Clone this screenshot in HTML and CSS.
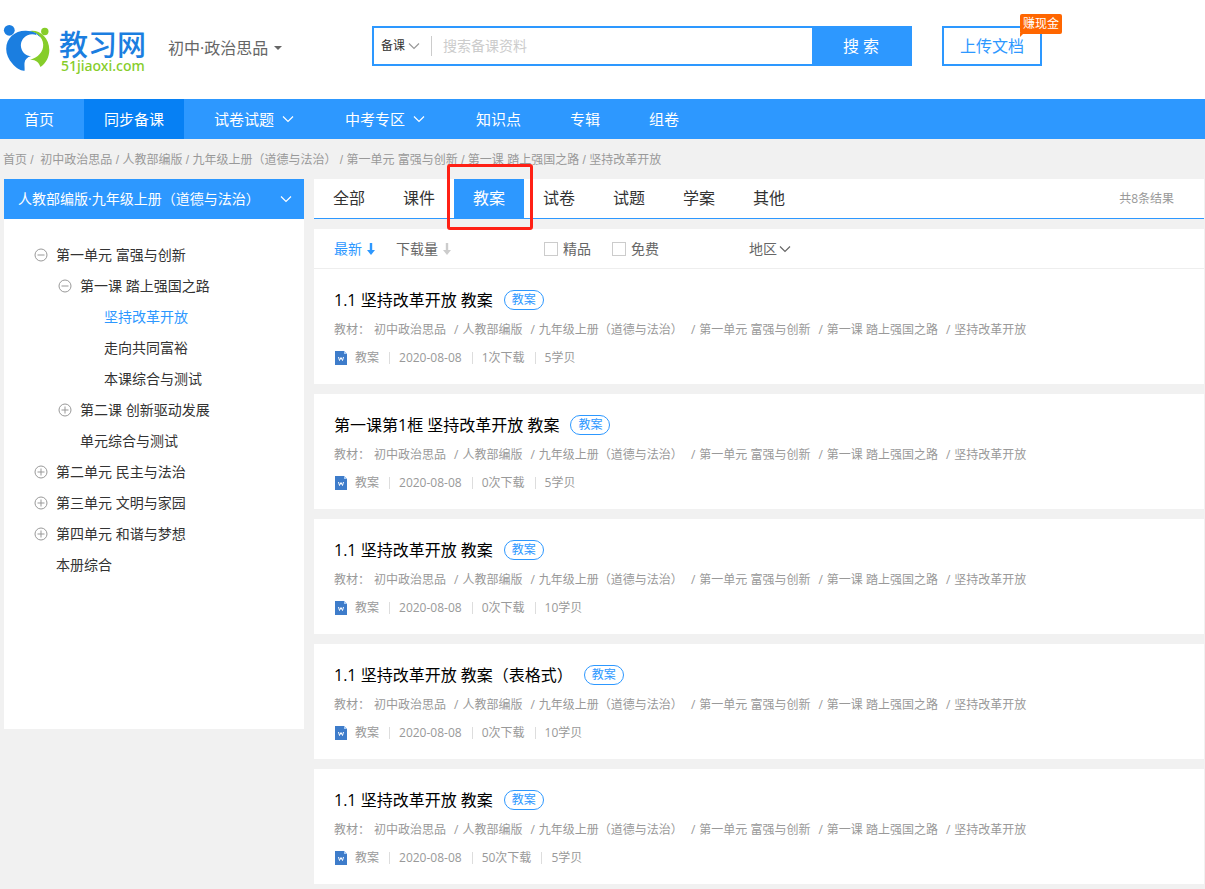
FILE: index.html
```html
<!DOCTYPE html>
<html lang="zh-CN">
<head>
<meta charset="utf-8">
<meta name="viewport" content="width=device-width, initial-scale=1">
<title>教习网</title>
<link rel="stylesheet" href="styles.css">
</head>
<body>
<svg class="sprite" aria-hidden="true">
  <symbol id="chev" viewBox="0 0 12 8"><path d="M1 1.5l5 5 5-5" fill="none" stroke="currentColor" stroke-width="1.2"/></symbol>
  <symbol id="down" viewBox="0 0 8 12"><path d="M2.8 0h2.4v7H8L4 12 0 7h2.8z" fill="currentColor"/></symbol>
  <symbol id="minus" viewBox="0 0 14 14"><circle cx="7" cy="7" r="6" fill="none" stroke="currentColor"/><path d="M3.5 7h7" stroke="currentColor"/></symbol>
  <symbol id="plus" viewBox="0 0 14 14"><circle cx="7" cy="7" r="6" fill="none" stroke="currentColor"/><path d="M3.5 7h7M7 3.5v7" stroke="currentColor"/></symbol>
  <symbol id="word" viewBox="0 0 12 14"><path d="M0 0h9l3 3v11H0z" fill="#3e7cca"/><path d="M9 0l3 3H9z" fill="#a9cdf5"/><path d="M3.500 6l1 3.500L6 6.500l1.500 3 1-3.500" fill="none" stroke="#fff" stroke-width="1"/></symbol>
</svg>

<header class="header">
  <div class="brand">
    <a class="logo" href="#">
      <svg class="logo-mark" viewBox="3 25 47 48" aria-hidden="true">
        <circle cx="9.300" cy="31.300" r="5.400" fill="#1b7ee0"/>
        <circle cx="44.800" cy="32.500" r="3.700" fill="#86cd2a"/>
        <path d="M28 32.200C38 29.500 49.300 37 49.300 51c0 7-3.300 13-8.800 17-1.700-4.500-4.500-7.500-10.500-7.200C38 58.500 43.500 53 43.200 45.500 42.800 38 37 33 28 32.200z" fill="#86cd2a"/>
        <path d="M6.200 50C6.200 39 15 31.500 26 31.800c6 .2 12 2.400 15 7-3.800-3.500-9-4.700-13.500-2.600-5 2.300-7.300 7.300-6.400 12.200 1 5.200 5.200 8.600 10 8.600-4 1.200-6.200 3.500-6.600 7-.2 2.500.3 5 .1 7.700-3.500.5-8.600-2.700-12.100-6.900C8.700 60.500 6.200 55.500 6.200 50z" fill="#1b7ee0"/>
        <path d="M36 35.500c3 1.600 5.300 4.600 5.800 8.500" fill="none" stroke="#fff" stroke-width="1"/>
      </svg>
      <span class="logo-text"><span class="logo-name">教习网</span><span class="logo-url">51jiaoxi.com</span></span>
    </a>
    <button class="subject" type="button">初中·政治思品<span class="caret"></span></button>
  </div>
  <form class="search">
    <label class="scope"><select aria-label="搜索范围"><option>备课</option></select><svg class="chev"><use href="#chev"/></svg></label>
    <input class="search-input" type="text" placeholder="搜索备课资料" aria-label="搜索备课资料">
    <button class="search-btn" type="button">搜 索</button>
  </form>
  <a class="upload" href="#">上传文档<span class="cash">赚现金</span></a>
</header>

<nav class="nav">
  <a href="#">首页</a>
  <a class="current" href="#">同步备课</a>
  <a href="#">试卷试题<svg class="chev"><use href="#chev"/></svg></a>
  <a href="#">中考专区<svg class="chev"><use href="#chev"/></svg></a>
  <a href="#">知识点</a>
  <a href="#">专辑</a>
  <a href="#">组卷</a>
</nav>

<div class="crumbs"><a href="#">首页</a> / &nbsp;<a href="#">初中政治思品</a> / <a href="#">人教部编版</a> / <a href="#">九年级上册（道德与法治）</a> / <a href="#">第一单元 富强与创新</a> / <a href="#">第一课 踏上强国之路</a> / <a href="#">坚持改革开放</a></div>

<div class="layout">
  <aside class="sidebar">
    <button class="book" type="button">人教部编版·九年级上册（道德与法治）<svg class="chev"><use href="#chev"/></svg></button>
    <ul class="tree">
      <li><a href="#"><svg><use href="#minus"/></svg>第一单元 富强与创新</a>
        <ul>
          <li><a href="#"><svg><use href="#minus"/></svg>第一课 踏上强国之路</a>
            <ul>
              <li><a class="leaf selected" href="#">坚持改革开放</a></li>
              <li><a class="leaf" href="#">走向共同富裕</a></li>
              <li><a class="leaf" href="#">本课综合与测试</a></li>
            </ul>
          </li>
          <li><a href="#"><svg><use href="#plus"/></svg>第二课 创新驱动发展</a></li>
          <li><a class="leaf" href="#">单元综合与测试</a></li>
        </ul>
      </li>
      <li><a href="#"><svg><use href="#plus"/></svg>第二单元 民主与法治</a></li>
      <li><a href="#"><svg><use href="#plus"/></svg>第三单元 文明与家园</a></li>
      <li><a href="#"><svg><use href="#plus"/></svg>第四单元 和谐与梦想</a></li>
      <li><a class="leaf" href="#">本册综合</a></li>
    </ul>
  </aside>

  <main class="main">
    <div class="tabs">
      <a href="#">全部</a>
      <a href="#">课件</a>
      <a class="active" href="#">教案<span class="marker"></span></a>
      <a href="#">试卷</a>
      <a href="#">试题</a>
      <a href="#">学案</a>
      <a href="#">其他</a>
      <span class="count">共8条结果</span>
    </div>

    <div class="filters">
      <div class="sorts">
        <button class="on" type="button">最新<svg><use href="#down"/></svg></button>
        <button type="button">下载量<svg><use href="#down"/></svg></button>
      </div>
      <div class="checks">
        <label><input type="checkbox">精品</label>
        <label><input type="checkbox">免费</label>
      </div>
      <button class="region" type="button">地区<svg class="chev"><use href="#chev"/></svg></button>
    </div>

    <div class="results">
      <article class="item">
        <h2><a href="#">1.1 坚持改革开放 教案</a><span class="tag">教案</span></h2>
        <p class="path">教材：<span>初中政治思品</span><i>/</i><span>人教部编版</span><i>/</i><span>九年级上册（道德与法治）</span><i>/</i><span>第一单元 富强与创新</span><i>/</i><span>第一课 踏上强国之路</span><i>/</i><span>坚持改革开放</span></p>
        <div class="info"><svg><use href="#word"/></svg><span>教案</span><span>2020-08-08</span><span>1次下载</span><span>5学贝</span></div>
      </article>
      <article class="item">
        <h2><a href="#">第一课第1框 坚持改革开放 教案</a><span class="tag">教案</span></h2>
        <p class="path">教材：<span>初中政治思品</span><i>/</i><span>人教部编版</span><i>/</i><span>九年级上册（道德与法治）</span><i>/</i><span>第一单元 富强与创新</span><i>/</i><span>第一课 踏上强国之路</span><i>/</i><span>坚持改革开放</span></p>
        <div class="info"><svg><use href="#word"/></svg><span>教案</span><span>2020-08-08</span><span>0次下载</span><span>5学贝</span></div>
      </article>
      <article class="item">
        <h2><a href="#">1.1 坚持改革开放 教案</a><span class="tag">教案</span></h2>
        <p class="path">教材：<span>初中政治思品</span><i>/</i><span>人教部编版</span><i>/</i><span>九年级上册（道德与法治）</span><i>/</i><span>第一单元 富强与创新</span><i>/</i><span>第一课 踏上强国之路</span><i>/</i><span>坚持改革开放</span></p>
        <div class="info"><svg><use href="#word"/></svg><span>教案</span><span>2020-08-08</span><span>0次下载</span><span>10学贝</span></div>
      </article>
      <article class="item">
        <h2><a href="#">1.1 坚持改革开放 教案（表格式）</a><span class="tag">教案</span></h2>
        <p class="path">教材：<span>初中政治思品</span><i>/</i><span>人教部编版</span><i>/</i><span>九年级上册（道德与法治）</span><i>/</i><span>第一单元 富强与创新</span><i>/</i><span>第一课 踏上强国之路</span><i>/</i><span>坚持改革开放</span></p>
        <div class="info"><svg><use href="#word"/></svg><span>教案</span><span>2020-08-08</span><span>0次下载</span><span>10学贝</span></div>
      </article>
      <article class="item">
        <h2><a href="#">1.1 坚持改革开放 教案</a><span class="tag">教案</span></h2>
        <p class="path">教材：<span>初中政治思品</span><i>/</i><span>人教部编版</span><i>/</i><span>九年级上册（道德与法治）</span><i>/</i><span>第一单元 富强与创新</span><i>/</i><span>第一课 踏上强国之路</span><i>/</i><span>坚持改革开放</span></p>
        <div class="info"><svg><use href="#word"/></svg><span>教案</span><span>2020-08-08</span><span>50次下载</span><span>5学贝</span></div>
      </article>
    </div>
  </main>
</div>
</body>
</html>
```

FILE: styles.css
```css
* { box-sizing: border-box; }

body {
  margin: 0;
  background: #f1f1f1;
  color: #333;
  font: 14px/20px "Open Sans", "Noto Sans CJK SC", sans-serif;
}

a { color: inherit; text-decoration: none; }
button, input, select { font: inherit; color: inherit; }
button { padding: 0; border: 0; background: none; cursor: pointer; }
ul { margin: 0; padding: 0; list-style: none; }
svg { flex: none; }

.sprite { display: none; }
.chev { width: 12px; height: 8px; }

/* Header */
.header {
  display: flex;
  align-items: flex-start;
  padding: 26px 20px 29px 3px;
  background: #fff;
}
.brand {
  display: flex;
  align-items: center;
  gap: 22px;
  flex: 0 0 369px;
  height: 44px;
}
.logo { display: flex; align-items: center; gap: 9px; }
.logo-mark { width: 47px; height: 48px; }
.logo-text { display: flex; flex-direction: column; padding-top: 6px; }
.logo-name {
  color: #1b7ee0;
  font-size: 29px;
  line-height: 29px;
  font-weight: 500;
}
.logo-url {
  padding-left: 2px;
  color: #86cd2a;
  font: 500 14px/14px "Noto Sans", sans-serif;
}
.subject {
  display: flex;
  align-items: center;
  gap: 6px;
  color: #666;
  font-size: 16px;
  white-space: nowrap;
}
.caret { border: 4px solid transparent; border-top-color: #666; border-bottom: 0; }

.search {
  display: flex;
  flex: 0 1 540px;
  min-width: 0;
  height: 40px;
  border: 2px solid #2d98ff;
}
.scope {
  display: flex;
  align-items: center;
  align-self: center;
  gap: 2px;
  height: 20px;
  padding: 0 11px 0 7px;
  border-right: 1px solid #ccc;
  color: #999;
}
.scope select {
  appearance: none;
  width: 25px;
  padding: 0;
  border: 0;
  background: none;
  color: #333;
  font-size: 12px;
}
.search-input {
  flex: 1;
  min-width: 0;
  padding: 0 11px;
  border: 0;
  outline: 0;
  background: none;
}
.search-input::placeholder { color: #ccc; }
.search-btn { width: 98px; background: #2d98ff; color: #fff; font-size: 16px; }

.upload {
  position: relative;
  flex: none;
  margin-left: 30px;
  padding: 8px 16px;
  border: 2px solid #2d98ff;
  color: #2d98ff;
  font-size: 16px;
}
.cash {
  position: absolute;
  top: -14px;
  right: -22px;
  padding: 0 3px;
  border-radius: 2px;
  background: #f60;
  color: #fff;
  font-size: 12px;
  white-space: nowrap;
}
.cash::after {
  content: "";
  position: absolute;
  top: 19px;
  left: 0;
  border-top: 4px solid #f60;
  border-right: 4px solid transparent;
}

/* Navigation */
.nav {
  display: flex;
  gap: 5px;
  padding-left: 2px;
  background: #2d98ff;
  color: #fff;
  font-size: 15px;
  line-height: 40px;
}
.nav a { display: flex; align-items: center; padding: 0 22px; }
.nav .current { margin: 0 3px; padding: 0 20px; background: #0680f4; }
.nav .chev { margin: 0 2px 0 8px; }

.crumbs {
  padding: 11px 3px 9px;
  color: #999;
  font-family: "Liberation Sans", "Noto Sans CJK SC", sans-serif;
  font-size: 12px;
}

.layout {
  display: flex;
  align-items: flex-start;
  gap: 10px;
  padding: 0 1px 5px 4px;
}

/* Sidebar */
.sidebar { flex: 0 0 300px; min-height: 550px; background: #fff; }
.book {
  display: flex;
  align-items: center;
  justify-content: space-between;
  width: 100%;
  height: 40px;
  padding: 0 12px 0 14px;
  background: #2d98ff;
  color: #fff;
}
.tree { padding: 20px 0 20px 30px; }
.tree ul { padding-left: 24px; }
.tree a { display: flex; align-items: center; gap: 8px; line-height: 31px; }
.tree svg { width: 14px; height: 14px; color: #999; }
.tree .leaf { padding-left: 22px; }
.tree .selected { color: #2d98ff; }

/* Tabs */
.main { flex: 1; min-width: 0; }
.tabs {
  display: flex;
  margin-bottom: 10px;
  border-bottom: 1px solid #2d98ff;
  background: #fff;
  font-size: 16px;
  line-height: 39px;
}
.tabs a { width: 70px; text-align: center; }
.tabs .active { position: relative; background: #2d98ff; color: #fff; }
.marker {
  position: absolute;
  inset: -15px -9px -12px -7px;
  border: 3px solid #ff2015;
  border-radius: 3px;
}
.count { margin-left: auto; padding-right: 30px; color: #999; font-size: 12px; }

/* Filters */
.filters {
  display: flex;
  align-items: center;
  height: 40px;
  padding: 0 20px;
  border-bottom: 1px solid #eee;
  background: #fff;
  color: #666;
}
.sorts, .checks { display: flex; gap: 21px; }
.sorts button { display: flex; align-items: center; gap: 5px; }
.sorts svg { width: 8px; height: 12px; color: #ccc; }
.sorts .on, .sorts .on svg { color: #2d98ff; }
.checks { margin: 0 90px 0 93px; }
.checks label { display: flex; align-items: center; gap: 5px; }
.checks input {
  appearance: none;
  width: 14px;
  height: 14px;
  margin: 0;
  border: 1px solid #ccc;
  background: #fff;
}
.region { display: flex; align-items: center; gap: 2px; }

/* Results */
.results { display: grid; gap: 10px; }
.item { padding: 21px 20px 16px; background: #fff; color: #999; font-size: 12px; }
.item h2 {
  display: flex;
  align-items: center;
  gap: 11px;
  margin: 0 0 10px;
  color: #000;
  font-size: 16px;
  font-weight: 400;
}
.tag {
  padding: 0 7px;
  border: 1px solid #2d98ff;
  border-radius: 10px;
  color: #2d98ff;
  font-size: 12px;
  line-height: 18px;
}
.path { margin: 0 0 8px; }
.path span:first-of-type { margin-left: 4px; }
.path i { margin: 0 4px 0 8px; font-style: normal; }
.info { display: flex; align-items: center; height: 20px; }
.info svg { width: 12px; height: 14px; margin: 0 8px 0 1px; }
.info span { line-height: 12px; }
.info span + span { margin-left: 10px; padding-left: 9px; border-left: 1px solid #ddd; }
```
